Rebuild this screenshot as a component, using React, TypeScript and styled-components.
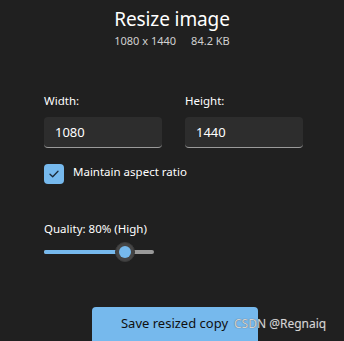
import React from "react";
import styled, { createGlobalStyle } from "styled-components";

const GlobalStyle = createGlobalStyle`
  html, body {
    margin: 0;
    padding: 0;
    background: #202020;
  }
  body {
    font-family: "Noto Sans", "Open Sans", sans-serif;
    color: #ffffff;
  }
`;

function App() {
  return (
    <>
      <GlobalStyle />
      <Page>
        <Header>
          <Title>Resize image</Title>
          <Meta>
            <span>1080 x 1440</span>
            <span>84.2 KB</span>
          </Meta>
        </Header>

        <Fields>
          <Field>
            <Label>Width:</Label>
            <Input defaultValue="1080" />
          </Field>
          <Field>
            <Label>Height:</Label>
            <Input defaultValue="1440" />
          </Field>
        </Fields>

        <CheckRow>
          <CheckBox>
            <svg width="10" height="8" viewBox="0 0 10 8">
              <path d="M1 4.2 L3.7 6.8 L9 1.2" fill="none" stroke="#1b2a38" strokeWidth="1.3" strokeLinecap="round" strokeLinejoin="round" />
            </svg>
          </CheckBox>
          <CheckText>Maintain aspect ratio</CheckText>
        </CheckRow>

        <QualityBlock>
          <Label>Quality: 80% (High)</Label>
          <Slider>
            <Track>
              <Fill style={{ width: "74%" }} />
            </Track>
            <Thumb style={{ left: "74%" }} />
          </Slider>
        </QualityBlock>

        <Footer>
          <SaveButton>Save resized copy</SaveButton>
          <Watermark>CSDN @Regnaiq</Watermark>
        </Footer>
      </Page>
    </>
  );
}
export default App;

const Page = styled.div`
  width: 344px;
  height: 341px;
  box-sizing: border-box;
  padding: 6px 41px 0 44px;
  display: flex;
  flex-direction: column;
  overflow: hidden;
  position: relative;
`;

const Header = styled.div`
  display: flex;
  flex-direction: column;
  align-items: center;
  margin-left: -44px;
  margin-right: -41px;
`;

const Title = styled.div`
  font-size: 19px;
  line-height: 26px;
  font-weight: 400;
  letter-spacing: -0.1px;
`;

const Meta = styled.div`
  display: flex;
  gap: 15px;
  font-size: 11px;
  line-height: 14px;
  color: #d0d0d0;
  margin-top: 2px;
`;

const Fields = styled.div`
  display: flex;
  gap: 23px;
  margin-top: 45px;
`;

const Field = styled.div`
  display: flex;
  flex-direction: column;
  width: 118px;
`;

const Label = styled.div`
  font-size: 11.5px;
  line-height: 16px;
  color: #ffffff;
`;

const Input = styled.input`
  margin-top: 8px;
  height: 31px;
  box-sizing: border-box;
  border: none;
  border-radius: 4px;
  border-bottom: 1px solid #9a9a9a;
  background: #2d2d2d;
  color: #ffffff;
  font-family: "Noto Sans", "Open Sans", sans-serif;
  font-size: 13px;
  padding: 0 11px;
  outline: none;
  width: 100%;
`;

const CheckRow = styled.div`
  display: flex;
  align-items: center;
  gap: 9px;
  margin-top: 16px;
`;

const CheckBox = styled.div`
  width: 20px;
  height: 20px;
  border-radius: 4px;
  background: #76b9ed;
  display: flex;
  align-items: center;
  justify-content: center;
`;

const CheckText = styled.div`
  font-size: 11.5px;
  line-height: 16px;
  margin-top: -4px;
`;

const QualityBlock = styled.div`
  display: flex;
  flex-direction: column;
  margin-top: 37px;
`;

const Slider = styled.div`
  position: relative;
  width: 110px;
  height: 22px;
  margin-top: 4px;
  display: flex;
  align-items: center;
`;

const Track = styled.div`
  width: 100%;
  height: 4px;
  border-radius: 2px;
  background: #9a9a9a;
  overflow: hidden;
`;

const Fill = styled.div`
  height: 100%;
  background: #76b9ed;
`;

const Thumb = styled.div`
  position: absolute;
  top: 50%;
  width: 20px;
  height: 20px;
  margin-left: -10px;
  margin-top: -10px;
  border-radius: 50%;
  background: #454545;
  box-sizing: border-box;
  border: 1px solid #3a3a3a;
  display: flex;
  align-items: center;
  justify-content: center;
  &::after {
    content: "";
    width: 12px;
    height: 12px;
    border-radius: 50%;
    background: #76b9ed;
  }
`;

const Footer = styled.div`
  position: relative;
  display: flex;
  justify-content: center;
  margin-top: auto;
  margin-left: -44px;
  margin-right: -41px;
`;

const SaveButton = styled.button`
  width: 166px;
  height: 40px;
  margin-bottom: -6px;
  margin-left: 5px;
  border: none;
  border-radius: 4px;
  background: #76b9ed;
  color: #101010;
  font-family: "Noto Sans", "Open Sans", sans-serif;
  font-size: 13px;
  padding: 0 0 9px;
`;

const Watermark = styled.div`
  position: absolute;
  left: 234px;
  top: 8px;
  font-size: 12px;
  color: #d4d4d4;
  text-shadow: 0 0 1px #555;
  white-space: nowrap;
`;
